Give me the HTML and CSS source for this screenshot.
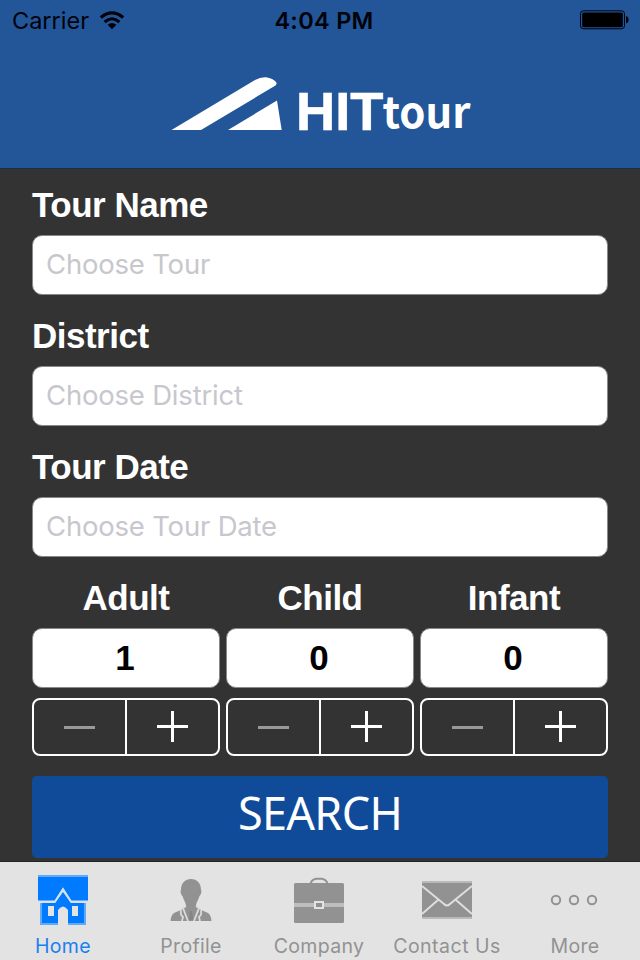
FILE: index.html
```html
<!DOCTYPE html>
<html lang="en">
<head>
<meta charset="utf-8">
<title>HITtour</title>
<link rel="stylesheet" href="styles.css">
</head>
<body>
<div class="app">
  <header class="header">
    <div class="status">
      <div class="status-left">
        <span class="carrier">Carrier</span>
        <svg class="wifi" width="26" height="20" viewBox="0 0 26 20">
          <g fill="none" stroke="#00020a" stroke-width="3"><path d="M1.800 6.500Q13 -2.800 24.200 6.500"/><path d="M5.600 11Q13 4.600 20.400 11"/></g>
          <path fill="#00020a" d="M8.600 13.700Q13 10.200 17.400 13.700L13 18.300Z"/>
        </svg>
      </div>
      <span class="time">4:04 PM</span>
      <svg class="battery" width="50" height="20" viewBox="0 0 50 20">
        <rect x="1.500" y=".8" width="44" height="18" rx="3" fill="none" stroke="#00020a"/>
        <rect x="3.200" y="2.400" width="40.600" height="14.800" rx="1.500" fill="#000"/>
        <path d="M47 6.300Q49.500 6.500 49.500 9.800T47 13.300Z" fill="#00020a"/>
      </svg>
    </div>
    <svg class="logo" width="320" height="100" viewBox="162 52 320 100">
      <path d="M171.500 130L255 80Q266 74 275 81Q278 83 275.500 85.500L201 130Z" fill="#fff"/>
      <path d="M228 130L277 100.500L281.700 130Z" fill="#fff"/>
      <text class="logo-main" x="296" y="129.500" textLength="87.500" lengthAdjust="spacingAndGlyphs">HIT</text>
      <text class="logo-sub" x="382.500" y="128" textLength="88" lengthAdjust="spacingAndGlyphs">tour</text>
    </svg>
  </header>
  <main class="form">
    <label class="group"><span class="label">Tour Name</span><input class="field" type="text" placeholder="Choose Tour"></label>
    <label class="group"><span class="label">District</span><input class="field" type="text" placeholder="Choose District"></label>
    <label class="group"><span class="label">Tour Date</span><input class="field" type="text" placeholder="Choose Tour Date"></label>
    <div class="counts">
      <div class="count"><span class="label">Adult</span><div class="field value">1</div>
        <div class="stepper"><button class="minus"><i></i></button><button class="plus"><i></i></button></div></div>
      <div class="count"><span class="label">Child</span><div class="field value">0</div>
        <div class="stepper"><button class="minus"><i></i></button><button class="plus"><i></i></button></div></div>
      <div class="count"><span class="label">Infant</span><div class="field value">0</div>
        <div class="stepper"><button class="minus"><i></i></button><button class="plus"><i></i></button></div></div>
    </div>
    <button class="search">SEARCH</button>
  </main>
  <nav class="tabs">
    <a class="tab active">
      <svg width="52" height="52" viewBox="0 0 52 52">
        <path d="M1 2H51V27H34L26 15L18 27H1Z" fill="#007aff"/>
        <path d="M1 2H51" stroke="#62aaf5" stroke-width="2"/>
        <path d="M3 29H18L26 18L34 29H49V51H3Z" fill="#007aff"/>
        <path d="M4 29V50H21M31 50H48V29" fill="none" stroke="#62aaf5" stroke-width="2"/>
        <path d="M1 27.500H18L26 15L34 27.500H51" fill="none" stroke="#d4e2f1" stroke-width="2"/>
        <path d="M11 32H17V42H11ZM35 32H41V42H35ZM21 51V36Q26 29 31 36V51Z" fill="#e3e3e3"/>
      </svg><span>Home</span></a>
    <a class="tab">
      <svg width="52" height="52" viewBox="0 0 52 52">
        <path d="M26 5C32 5 36 9 36 16C37 17 36 21 34.500 22C33 27 31 29 31 32L34 35L43 39Q46 41 46.500 47H5.500Q6 41 9 39L18 35L21 32C21 29 19 27 17.500 22C16 21 15 17 16 16C16 9 20 5 26 5Z" fill="#929292"/>
        <path d="M21 32L18 34L23 47M31 32L34 34L29 47M16 36Q15 41 18 43L17 47M36 36Q37 41 34 43L35 47" fill="none" stroke="#dcdcdc" stroke-width="1.800"/>
        <path d="M25 37H27L28 46H24Z" fill="#858585"/>
      </svg><span>Profile</span></a>
    <a class="tab">
      <svg width="52" height="52" viewBox="0 0 52 52">
        <path d="M17.500 9.500Q19 5.500 23 4.800H29Q33 5.500 34.500 9.500" fill="none" stroke="#929292" stroke-width="2"/>
        <rect x="1" y="9" width="50" height="40" rx="1.500" fill="#929292"/>
        <path d="M1 31H51" stroke="#bebebe" stroke-width="4"/>
        <rect x="22" y="28" width="8" height="6" fill="#929292" stroke="#e3e3e3" stroke-width="2"/>
      </svg><span>Company</span></a>
    <a class="tab">
      <svg width="52" height="52" viewBox="0 0 52 52">
        <path d="M1 7H51V45H1Z" fill="#929292"/>
        <path d="M1 8H51M1 44H51" stroke="#bababa" stroke-width="2"/>
        <path d="M1 12L23 30Q26 33 29 30L51 12M1 40L17 26M51 40L35 26" fill="none" stroke="#dedede" stroke-width="2"/>
      </svg><span class="wide">Contact Us</span></a>
    <a class="tab">
      <svg width="52" height="52" viewBox="0 0 52 52">
        <g fill="none" stroke="#929292" stroke-width="2"><circle cx="7" cy="26" r="4.200"/><circle cx="25" cy="26" r="4.200"/><circle cx="43" cy="26" r="4.200"/></g>
      </svg><span>More</span></a>
  </nav>
</div>
</body>
</html>
```
FILE: styles.css
```css
* { box-sizing: border-box; }
body { margin: 0; background: #333; font-family: Inter, sans-serif; }
button { padding: 0; border: 0; background: none; font: inherit; color: inherit; }
.app { width: 640px; height: 960px; display: flex; flex-direction: column; overflow: hidden; }
.header { height: 169px; background: #235599; border-bottom: 1px solid #1d2e47; display: flex; flex-direction: column; align-items: center; }
.status { width: 640px; height: 42px; flex: none; padding: 0 11px 0 12px; display: grid; grid-template-columns: 1fr auto 1fr; align-items: center; line-height: 42px; color: #00020a; }
.status-left { display: flex; align-items: center; gap: 10px; }
.carrier { font-size: 23.5px; }
.time { font-weight: 600; font-size: 23.5px; letter-spacing: .3px; padding-left: 7px; }
.battery { justify-self: end; margin-bottom: 2px; }
.wifi { margin-bottom: 1px; }
.logo { flex: none; margin-top: 10px; margin-left: 4px; overflow: visible; }
.logo-main, .logo-sub { font-weight: 700; fill: #fff; }
.logo-main { font-family: "Liberation Sans", sans-serif; font-size: 53px; stroke: #fff; stroke-width: .6px; }
.logo-sub { font-family: "Noto Sans CJK JP", sans-serif; font-size: 43px; }
.form { height: 692px; padding: 6px 32px 0; }
.group { display: block; height: 131px; }
.label { display: block; height: 60px; line-height: 60px; font-family: "Liberation Sans", sans-serif; font-weight: 700; font-size: 35px; letter-spacing: -.5px; color: #fff; }
.field { display: block; width: 100%; height: 60px; border: 1px solid #888; border-radius: 10px; background: #fff; padding: 0 14px 2px 13px; font-family: Inter, sans-serif; font-size: 27.5px; letter-spacing: -.2px; font-weight: 400; outline: 0; }
.field::placeholder { color: #c7c7cd; opacity: 1; }
.counts { display: grid; grid-template-columns: repeat(3, 188px); gap: 6px; }
.count .label { text-align: center; }
.value { line-height: 57px; text-align: center; font-family: "Liberation Sans", sans-serif; font-weight: 700; font-size: 35px; padding: 0 2px 0 0; color: #000; }
.stepper { height: 58px; margin-top: 10px; border: 2px solid #fff; border-radius: 8px; display: grid; grid-template-columns: 91px 93px; }
.stepper button { display: grid; place-items: center; }
.plus { border-left: 2px solid #fff !important; }
.minus i { width: 31px; height: 3px; background: #999; }
.plus i { width: 31px; height: 31px; background: linear-gradient(#fff, #fff) center / 31px 3px no-repeat, linear-gradient(#fff, #fff) center / 3px 31px no-repeat; margin-bottom: 1px; }
.search { display: block; width: 576px; height: 82px; margin-top: 20px; padding-bottom: 9px; border-radius: 5px; background: #104b9a; color: #fff; font-family: "Noto Sans", sans-serif; font-size: 45px; font-weight: 400; letter-spacing: -.7px; text-align: center; }
.tabs { height: 99px; border-top: 1px solid #222; background: #e3e3e3; display: grid; grid-template-columns: repeat(5, 128px); margin-left: -1px; width: 641px; }
.tab { display: flex; flex-direction: column; align-items: center; padding-top: 12px; color: #929292; }
.tab svg { display: block; }
.tab span { font-size: 19.5px; line-height: 24px; margin-top: 8px; letter-spacing: .3px; white-space: nowrap; }
.tab .wide { letter-spacing: .5px; }
.tab.active { color: #1a80f0; }
```
